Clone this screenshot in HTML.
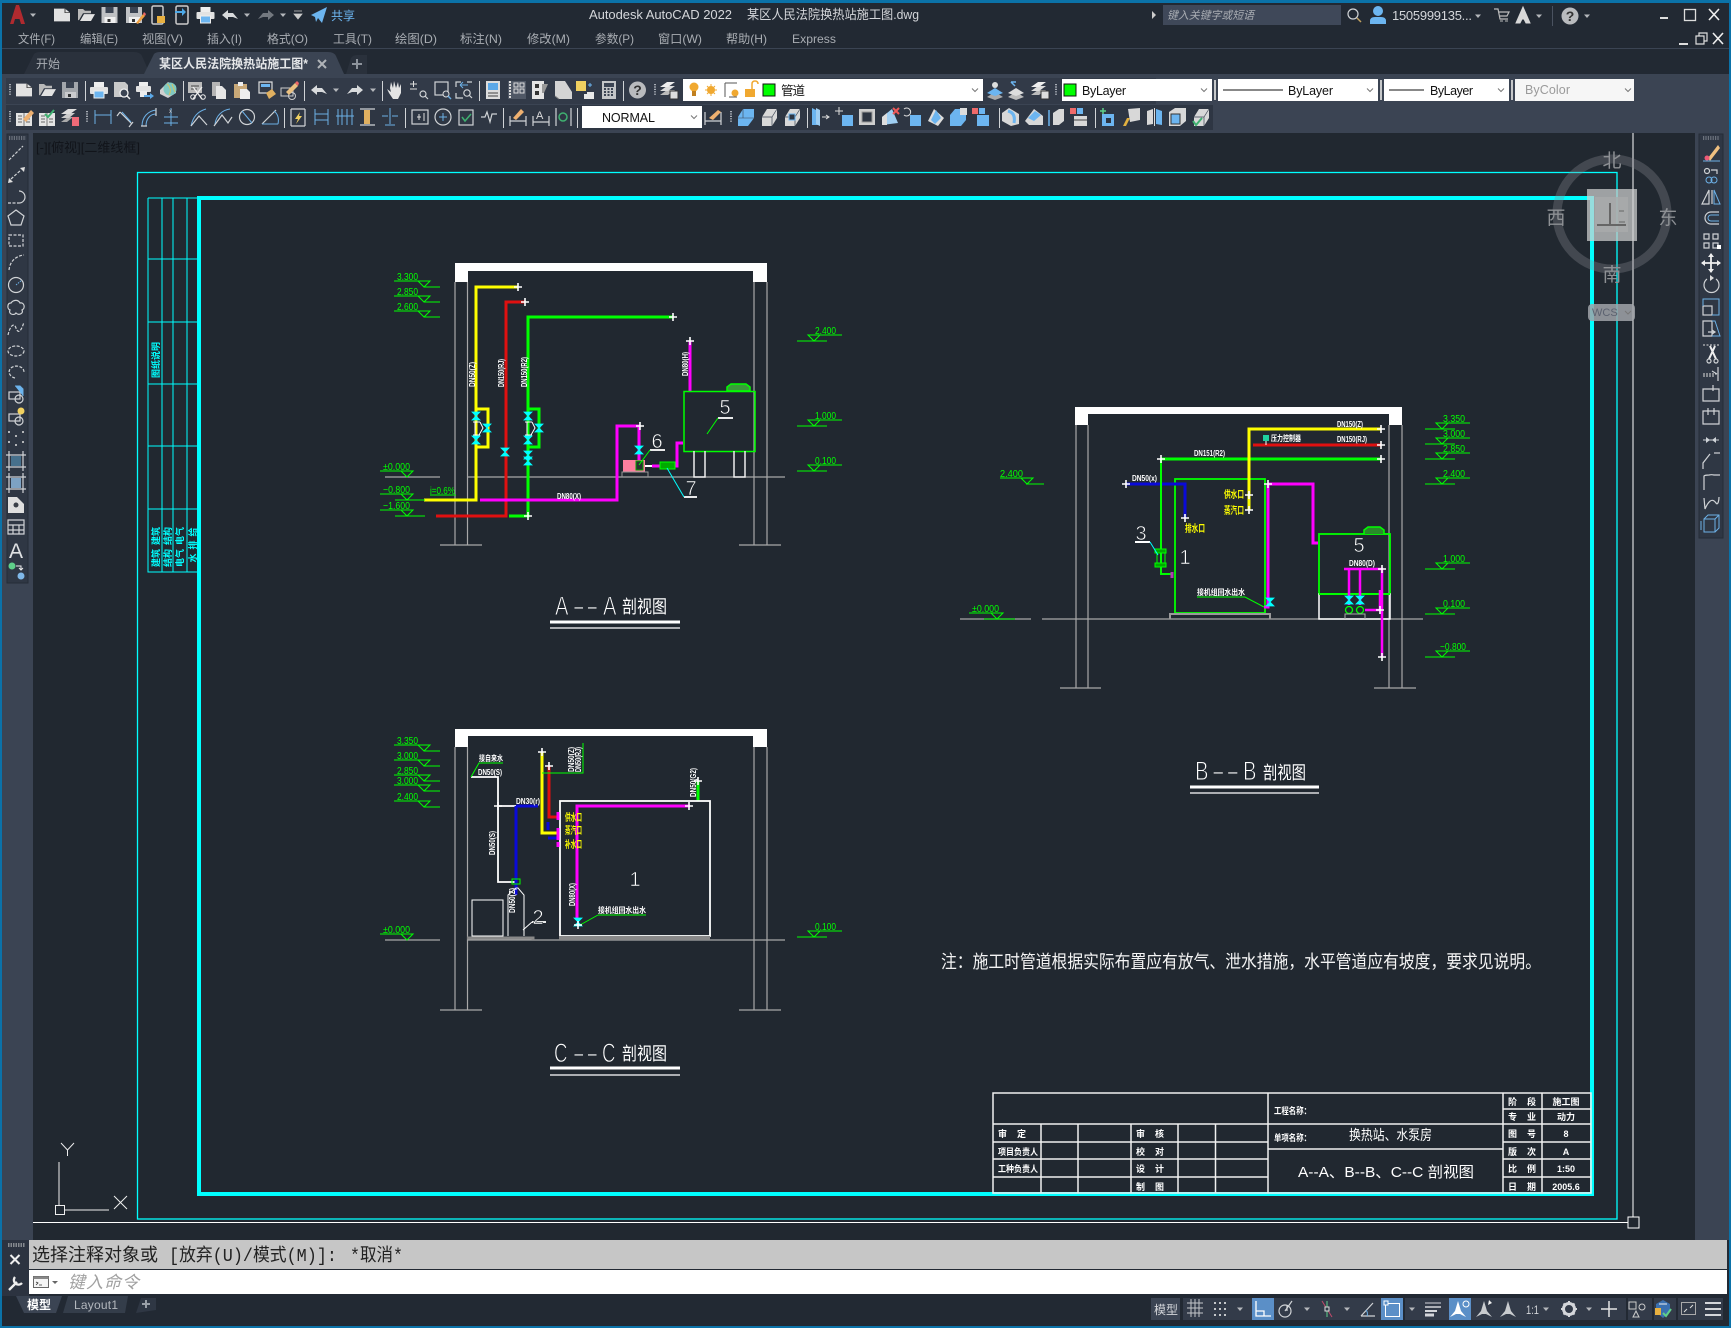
<!DOCTYPE html>
<html lang="zh"><head><meta charset="utf-8"><title>Autodesk AutoCAD 2022</title>
<style>
html,body{margin:0;padding:0;background:#222933;width:1731px;height:1328px;overflow:hidden}
svg{display:block}
text{font-family:"Liberation Sans","Noto Sans CJK SC",sans-serif}
.m{font-size:12px;fill:#a9adb3}
.t{font-size:13px;fill:#d4d6da}
.k{font-size:12.5px;fill:#111}
.g{font-size:10px;fill:#0f0}
.w{font-size:8px;fill:#fff;font-weight:700}
.y{font-size:10px;fill:#ff0;font-weight:700}
.n{font-size:20px;fill:#fff;stroke:#212830;stroke-width:.6}
.ti{font-size:27px;fill:#fff;stroke:#212830;stroke-width:.9}
.tc{font-size:18px;fill:#fff}
.b{font-size:9px;fill:#fff;font-weight:700}
.c{font-size:9px;fill:#0ff;font-weight:700}
.s{fill:none;stroke:#d0d3d6;stroke-width:1.2}
.d{fill:none;stroke:#d0d3d6;stroke-width:1.2;stroke-dasharray:3 1.5}
.l{fill:none;stroke:#6cb0e6;stroke-width:1}
.v{fill:#8d9094;font-size:19px}
.cmd{font-family:"Liberation Mono","Noto Sans CJK SC",monospace;font-size:18px;fill:#222}
</style></head><body>
<svg width="1731" height="1328" viewBox="0 0 1731 1328" xmlns="http://www.w3.org/2000/svg">
<defs>
<path id="car" d="M-3-1.5H3L0 2Z" fill="#b4b7bb"/>
<path id="chv" d="M-3-1.5L0 1.5L3-1.5" fill="none" stroke="#777" stroke-width="1"/>
<g id="doc" transform="scale(1 .8)"><path d="M-8-8H3L8-3V8H-8Z" fill="#e2e2e2"/><path d="M3-8V-3H8" fill="none" stroke="#444"/></g>
<g id="open" transform="scale(1 .85)"><path d="M-8 6V-7H-3L-1-5H5V-2H-3L-7 6Z" fill="#b9b9b9"/><path d="M-6 7L-2-1H9L5 7Z" fill="#e2e2e2"/></g>
<g id="save"><path d="M-8-8H8V8H-8Z" fill="#bfc1c4"/><path d="M-4-8H4V-2H-4Z" fill="#3b4453"/><path d="M-5 2H6V8H-5Z" fill="#f0f0f0"/><rect x="-2" y="4" width="3" height="3" fill="#333"/></g>
<g id="sav2"><use href="#save"/><path d="M2 8L9-1L11 1L4 9Z" fill="#f0a040"/><path d="M9-1L11 1L12-1L10-3Z" fill="#e66"/></g>
<g id="print"><rect x="-5" y="-8" width="10" height="5" fill="#eee"/><rect x="-9" y="-3" width="18" height="7" rx="1" fill="#e2e2e2"/><rect x="-5" y="1" width="10" height="7" fill="#6cb5f0" stroke="#eee"/></g>
<g id="prev"><path d="M-8-8H3L6-5V7H-8Z" fill="#c9c9c9"/><circle cx="2" cy="3" r="4" fill="#3b4453" stroke="#eee" stroke-width="1.3"/><path d="M5 6L8 9" stroke="#eee" stroke-width="1.5"/></g>
<g id="pub"><rect x="-5" y="-8" width="9" height="4" fill="#eee"/><rect x="-8" y="-4" width="15" height="6" rx="1" fill="#e2e2e2"/><rect x="-4" y="1" width="7" height="6" fill="#eee"/><path d="M0 5H6V3L10 6L6 9V7H0Z" fill="#5ba8e8"/></g>
<g id="globe"><path d="M-8 0L0-8L8-4V3L0 8L-8 4Z" fill="#cfcfcf"/><circle cx="2" cy="-1" r="6.5" fill="#7fc9c2"/><path d="M-1-6C3-3 3 2 1 5M4-6L7 2" stroke="#d8c060" fill="none"/></g>
<g id="cut"><path d="M-8-8H6V3H-8Z" fill="#bbb"/><path d="M-5-4H3M-5-1H1" stroke="#444"/><path d="M-3-3L6 9M6-3L-3 9" stroke="#eee" stroke-width="1.3"/><circle cx="-3" cy="7" r="2.3" fill="none" stroke="#eee"/><circle cx="7" cy="7" r="2.3" fill="none" stroke="#eee"/></g>
<g id="copy"><path d="M-7-8H1V6H-7Z" fill="#b5b5b5"/><path d="M-3-4H3L7 0V9H-3Z" fill="#e6e6e6"/></g>
<g id="paste"><path d="M-8-6H5V8H-8Z" fill="#c8a878"/><rect x="-4" y="-8" width="5" height="4" fill="#eee"/><path d="M-2-1H5L8 2V9H-2Z" fill="#eee"/></g>
<g id="match"><path d="M-7-8H6V3H-7Z" fill="none" stroke="#ddd" stroke-width="1.2"/><rect x="-5" y="-6" width="9" height="3" fill="#6cb5f0"/><path d="M0 3L6-1L10 4L3 9Z" fill="#e0b060"/></g>
<g id="pen2"><rect x="-8" y="-2" width="12" height="8" fill="none" stroke="#ccc"/><circle cx="3" cy="6" r="3.5" fill="none" stroke="#ccc"/><path d="M-3 2L6-7L9-4L0 5Z" fill="#eac080"/><path d="M6-7L9-4L10-7L8-9Z" fill="#e66"/></g>
<path id="und" d="M-8 0L-2-5V-2H3L8 4L3 2H-2V5Z" fill="#d8dadc"/>
<path id="red" d="M8 0L2-5V-2H-3L-8 4L-3 2H2V5Z" fill="#d8dadc"/>
<path id="hand" d="M-6-2L-5-8L-3-2L-2-9L0-2L2-8L3-2L5-6L5 3L2 9H-3L-7 3L-9-1L-5 2Z" fill="#e4e4e4"/>
<g id="zq"><path d="M-11-6H-4M-7.500-9V-3M-11-1H-4" stroke="#ddd" fill="none"/><circle cx="2" cy="4" r="3" class="s"/><path d="M4 6L7 9" class="s"/></g>
<g id="zw"><rect x="-8" y="-8" width="13" height="13" class="s"/><circle cx="3" cy="4" r="3" fill="#3b4453" stroke="#ddd"/><path d="M5 6L8 9" stroke="#6cb0e6" stroke-width="1.5"/></g>
<g id="zp"><path d="M-8-3V-8H-3M3-8H8M-8 3V8H-1" class="s"/><path d="M-4-5H4M-4-5L-1-8M-4-5L-1-2" class="l"/><circle cx="3" cy="3" r="3.200" class="s"/><path d="M5 5L8 8" class="s"/></g>
<g id="prop"><rect x="-7" y="-9" width="14" height="18" fill="#ddd"/><rect x="-5" y="-7" width="10" height="7" fill="#5ba8e8"/><path d="M-5 3H5M-5 6H5" stroke="#444"/></g>
<g id="pal"><rect x="-9" y="-9" width="18" height="18" fill="#505866"/><path d="M-7-9V9" stroke="#ddd" stroke-dasharray="2 1" stroke-width="2"/><rect x="-3" y="-7" width="4" height="4" fill="none" stroke="#ddd"/><rect x="3" y="-7" width="4" height="4" fill="none" stroke="#ddd"/><rect x="-3" y="-1" width="4" height="4" fill="none" stroke="#ddd"/><rect x="3" y="-1" width="4" height="4" fill="none" stroke="#ddd"/></g>
<g id="tp"><path d="M-8-9H4V9H-8Z" fill="#e4e4e4"/><path d="M-5-6H-1V-2H-5ZM-5 1H-1V5H-5Z" fill="#333"/><path d="M2-6H8L4 3H2Z" fill="#999"/></g>
<g id="sh"><path d="M-8 6V-9L2-9L9 2V9H-4Z" fill="#d4d4d4"/><path d="M-4 9L-8 6" stroke="#888"/></g>
<g id="mk"><rect x="-9" y="-9" width="10" height="10" fill="#f0d060"/><path d="M2 2H9V9H-1V4H2Z" fill="#e8e8e8"/><path d="M3-5H7M5-7V-3" stroke="#6cb5f0"/></g>
<g id="calc"><rect x="-7" y="-9" width="14" height="18" fill="#c4c6c8"/><rect x="-5" y="-7" width="10" height="4" fill="#3b4453"/><path d="M-5-1H5M-5 2H5M-5 5H5" stroke="#3b4453" stroke-dasharray="2 1.500" stroke-width="2"/></g>
<g id="help"><circle r="8.500" fill="#b9bbbe"/><text x="0" y="5" text-anchor="middle" style="font-size:14px;font-weight:700;fill:#333">?</text></g>
<g id="lay"><path d="M-9 5L-2 0H6L-1 5Z" fill="#bbb"/><path d="M-9 1L-2-4H6L-1 1Z" fill="#ddd"/><path d="M-9-3L-2-8H6L-1-3Z" fill="#eee"/><rect x="1" y="1" width="8" height="8" fill="#ddd" stroke="#333"/></g>
<g id="note"><path d="M-8-4H8V9H-8Z" fill="#e4e4e4"/><path d="M0-4V9" stroke="#777"/><path d="M-6-1H-2M-6 2H-2M2 2H6M2 5H6M-6 5H-2" stroke="#666"/></g>
<g id="c3b"><path d="M-8 0L-3-8H8V1L2 9H-8Z" fill="#6cb5f0"/><path d="M-3-8L-3 1H-8M-3 1H8" stroke="#3b4453" stroke-width=".6" fill="none"/></g>
<g id="c3g"><path d="M-7 0L-2-8H8V1L3 9H-7Z" fill="#d8d8d8"/><path d="M-7 0H3V9M3 0L8-8" stroke="#3b4453" stroke-width=".7" fill="none"/></g>
<g id="box"><rect x="-6" y="-5" width="12" height="12" fill="#6cb5f0"/><rect x="-2" y="-1" width="5" height="5" fill="#2c3340"/></g>
<g id="mL"><path d="M0 0H36L30 6L24 0M30 6H46" fill="none" stroke="#0f0"/></g>
<g id="mR"><path d="M0 6H30M11 0H23L17 6ZM17 0H45" fill="none" stroke="#0f0"/></g>
<g id="mG"><path d="M0 0H33L27 6L21 0" fill="none" stroke="#0f0"/></g>
<g id="val"><path d="M-4-4H4L-4 4H4Z" fill="#0ff" stroke="#0ff" stroke-width=".8"/></g>
<path id="x" d="M-4 0H4M0-4V4" stroke="#fff" stroke-width="1.6" fill="none"/>
<g id="dot"><path d="M0 0V12" stroke="#a8adb5" stroke-width="2" stroke-dasharray="1.2 1.2"/></g>
</defs>

<!-- window -->
<rect width="1731" height="1328" fill="#222933"/>
<rect x="0" y="48" width="1731" height="1" fill="#3b4453"/>
<path d="M24 74L34 54Q36 52 40 52H134Q140 52 142 56L150 74Z" fill="#2a313c"/>
<path d="M144 74L154 54Q156 52 160 52H328Q334 52 336 56L344 74Z" fill="#3b4453"/>
<path d="M346 74L351 58Q353 55 357 55H367V74Z" fill="#2a313c"/>
<!-- toolbar band -->
<rect x="0" y="74" width="1731" height="59" fill="#3b4453"/>
<rect x="6" y="78" width="1150" height="26" fill="#323a48"/>
<rect x="6" y="105" width="1207" height="25" fill="#2e3643"/>
<!-- side bars -->
<rect x="0" y="133" width="33" height="1107" fill="#3b4453"/>
<rect x="1695" y="133" width="36" height="1107" fill="#3b4453"/>
<rect x="7" y="134" width="21" height="449" fill="#2f3744" stroke="#252c37"/>
<rect x="1699" y="134" width="24" height="404" fill="#2f3744" stroke="#252c37"/>
<!-- drawing area -->
<rect x="33" y="133" width="1662" height="1107" fill="#212830"/>
<text x="36" y="152" style="font-size:13px;fill:#11141a">[-][俯视][二维线框]</text>

<!-- frame -->
<g fill="none">
<path d="M1633 133V1223M33 1222.500H1633" stroke="#fff" stroke-width="1"/>
<rect x="137.500" y="172.500" width="1479.500" height="1046.500" stroke="#0ff" stroke-width="1.300"/>
<rect x="199" y="198" width="1393" height="996" stroke="#0ff" stroke-width="4"/>
<path d="M148 198V572H199M162 198V572M173 198V572M187 198V572M148 198H199M148 259H199M148 322H199M148 384H199M148 446H199M148 509H199" stroke="#0ff" stroke-width="1"/>
<rect x="1628" y="1217" width="11" height="11" stroke="#fff" fill="#212830"/>
</g>
<g text-anchor="middle">
<text transform="translate(159,351) rotate(-90)" class="c">说明</text>
<text transform="translate(159,369) rotate(-90)" class="c">图纸</text>
<text transform="translate(159,536) rotate(-90)" class="c">建筑</text>
<text transform="translate(159,558) rotate(-90)" class="c">建筑</text>
<text transform="translate(171,536) rotate(-90)" class="c">结构</text>
<text transform="translate(171,558) rotate(-90)" class="c">结构</text>
<text transform="translate(183,536) rotate(-90)" class="c">电气</text>
<text transform="translate(183,558) rotate(-90)" class="c">电气</text>
<text transform="translate(196,532) rotate(-90)" class="c">给</text>
<text transform="translate(196,545) rotate(-90)" class="c">排</text>
<text transform="translate(196,558) rotate(-90)" class="c">水</text>
</g>

<!-- SECTION A -->
<g fill="none">
<path d="M455 263H767V282H753V271H468V282H455Z" fill="#fff"/>
<path d="M455 282V545M467.500 282V545M440 545H482M754 282V545M767 282V545M739 545H781M385 477H440M467 477H785" stroke="#a8a8a8" stroke-width="1.200"/>
<g stroke-width="3">
<path d="M518 287H476V500H424M476 409H488V447H476" stroke="#ff0"/>
<path d="M525 302H506V516H436" stroke="#e01010"/>
<path d="M673 317H528V516H509M528 409H539V447H528" stroke="#0f0"/>
<path d="M480 500H617V426H639V460M652 466H660M675 466H677V443H683M690 341V392" stroke="#f0f"/>
</g>
<rect x="684" y="391.500" width="71" height="60" stroke="#0f0" stroke-width="1.500"/>
<path d="M727 391V387L731 384H746L750 387V391Z" stroke="#0f0" stroke-width="1.500" fill="#3a9a3a"/>
<path d="M694 451V477H705V451M734 451V477H745V451" stroke="#eee" stroke-width="1.500"/>
<rect x="623" y="460" width="22" height="12" fill="#ff7f9f"/><rect x="636" y="461" width="7" height="9" fill="#2a3030" stroke="#0a0"/>
<path d="M622 477V472H648V477" stroke="#999"/>
<rect x="660" y="462" width="15" height="7" fill="#0a0" stroke="#0f0"/>
<path d="M645 466H652" stroke="#fff" stroke-width="2"/>
<path d="M718 418H733" stroke="#fff" stroke-width="1.800"/><path d="M718 418L707 434" stroke="#0f0"/>
<path d="M650 450H665" stroke="#fff" stroke-width="1.800"/><path d="M650 450L639 465" stroke="#0f0"/>
<path d="M684 497H697" stroke="#fff" stroke-width="1.800"/><path d="M684 497L667 468" stroke="#0ff"/>
<path d="M473 422H480M473 435H480M475 422V435M480 422L483 428L479 435" stroke="#fff"/>
<path d="M525 422H532M525 435H532M527 422V435M532 422L535 428L531 435" stroke="#fff"/>
<path d="M550 622H680" stroke="#fff" stroke-width="3"/><path d="M550 628H680" stroke="#fff" stroke-width="1.300"/>
</g>
<use href="#val" x="476" y="416"/><use href="#val" x="476" y="440"/><use href="#val" x="487" y="428"/>
<use href="#val" x="528" y="416"/><use href="#val" x="528" y="440"/><use href="#val" x="539" y="428"/><use href="#val" x="528" y="455"/><use href="#val" x="528" y="461"/>
<use href="#val" x="505" y="452"/><use href="#val" x="639" y="450"/>
<use href="#x" x="518" y="287"/><use href="#x" x="525" y="302"/><use href="#x" x="673" y="317"/><use href="#x" x="690" y="341"/><use href="#x" x="640" y="426"/><use href="#x" x="528" y="516"/>
<use href="#mL" x="394" y="281"/><use href="#mL" x="394" y="296"/><use href="#mL" x="394" y="311"/>
<use href="#mR" x="797" y="335"/><use href="#mR" x="797" y="420"/><use href="#mR" x="797" y="465"/>
<use href="#mG" x="380" y="471"/><use href="#mG" x="380" y="494"/><use href="#mG" x="380" y="510"/>
<path d="M395 500H425M395 516H425" stroke="#0f0" fill="none"/>
<path d="M430 495H456" stroke="#0f0" fill="none"/>
<g>
<text class="g" x="397" y="280" textLength="21" lengthAdjust="spacingAndGlyphs">3.300</text>
<text class="g" x="397" y="295" textLength="21" lengthAdjust="spacingAndGlyphs">2.850</text>
<text class="g" x="397" y="310" textLength="21" lengthAdjust="spacingAndGlyphs">2.600</text>
<text class="g" x="815" y="334" textLength="21" lengthAdjust="spacingAndGlyphs">2.400</text>
<text class="g" x="815" y="419" textLength="21" lengthAdjust="spacingAndGlyphs">1.000</text>
<text class="g" x="815" y="464" textLength="21" lengthAdjust="spacingAndGlyphs">0.100</text>
<text class="g" x="383" y="470" textLength="27" lengthAdjust="spacingAndGlyphs">±0.000</text>
<text class="g" x="383" y="493" textLength="27" lengthAdjust="spacingAndGlyphs">−0.800</text>
<text class="g" x="383" y="509" textLength="27" lengthAdjust="spacingAndGlyphs">−1.600</text>
<text class="g" x="430" y="494" textLength="25" lengthAdjust="spacingAndGlyphs">i=0.6%</text>
</g>
<text class="w" x="557" y="499" textLength="24" lengthAdjust="spacingAndGlyphs">DN80(X)</text>
<text class="w" transform="translate(475,387) rotate(-90)" textLength="25" lengthAdjust="spacingAndGlyphs">DN50(Z)</text>
<text class="w" transform="translate(504,387) rotate(-90)" textLength="28" lengthAdjust="spacingAndGlyphs">DN150(RJ)</text>
<text class="w" transform="translate(527,387) rotate(-90)" textLength="30" lengthAdjust="spacingAndGlyphs">DN150(R2)</text>
<text class="w" transform="translate(688,376) rotate(-90)" textLength="24" lengthAdjust="spacingAndGlyphs">DN80(H)</text>
<text class="n" x="725" y="414" text-anchor="middle">5</text>
<text class="n" x="657" y="448" text-anchor="middle">6</text>
<text class="n" x="691" y="495" text-anchor="middle">7</text>
<text class="ti" x="555" y="615" textLength="13.500" lengthAdjust="spacingAndGlyphs">A</text>
<text class="ti" x="572" y="615" textLength="27" lengthAdjust="spacingAndGlyphs">--</text>
<text class="ti" x="603" y="615" textLength="13.500" lengthAdjust="spacingAndGlyphs">A</text>
<text class="tc" x="622" y="613" textLength="45" lengthAdjust="spacingAndGlyphs">剖视图</text>

<!-- SECTION B -->
<g fill="none">
<path d="M1075 407H1402V425H1389V414H1088V425H1075Z" fill="#fff"/>
<path d="M1076 425V688M1088 425V688M1060 688H1101M1389 425V688M1402 425V688M1374 688H1416M960 619H1031M1042 619H1423" stroke="#a8a8a8" stroke-width="1.200"/>
<rect x="1175" y="479" width="90" height="134" stroke="#0f0" stroke-width="1.800"/>
<path d="M1170 619V614H1270V619" stroke="#999" stroke-width="2"/>
<g stroke-width="3">
<path d="M1161 459H1381" stroke="#0f0"/>
<path d="M1253 445H1381" stroke="#e01010"/>
<path d="M1126 484H1185V518" stroke="#0a0ad8"/>
<path d="M1381 429H1249V510" stroke="#ff0"/>
<path d="M1268 484H1313V543H1318M1268 484V607H1264" stroke="#f0f"/>
</g>
<path d="M1161 459V574H1172" stroke="#0f0" stroke-width="2"/>
<rect x="1155" y="549" width="11" height="4" fill="#0a0" stroke="#0f0"/><rect x="1157" y="553" width="8" height="11" stroke="#0f0"/><rect x="1155" y="563" width="11" height="4" fill="#0a0" stroke="#0f0"/>
<path d="M1172 572V578" stroke="#b040b0" stroke-width="3"/>
<rect x="1319" y="534" width="71" height="60" stroke="#0f0" stroke-width="1.800"/>
<path d="M1319 594H1390V619H1319Z" stroke="#fff" stroke-width="1.500"/>
<path d="M1319 594H1390" stroke="#0f0" stroke-width="2"/>
<path d="M1364 534V530L1368 527H1380L1384 530V534" stroke="#0f0" stroke-width="1.500" fill="#2a8a2a"/>
<g stroke="#f0f" stroke-width="2.500"><path d="M1344 569H1382V657M1349 569V605M1360 569V605M1365 610H1380M1380 590V610"/></g>
<circle cx="1349" cy="610" r="3.500" stroke="#0f0" stroke-width="1.300"/><circle cx="1360" cy="610" r="3.500" stroke="#0f0" stroke-width="1.300"/>
<path d="M1345 619V614H1365V619" stroke="#aaa"/>
<path d="M1135 542H1150" stroke="#fff" stroke-width="2"/><path d="M1150 542L1158 555" stroke="#0ff"/>
<path d="M1197 597H1245L1264 607" stroke="#0f0"/>
<path d="M1190 787H1319" stroke="#fff" stroke-width="3"/><path d="M1190 793H1319" stroke="#fff" stroke-width="1.300"/>
</g>
<rect x="1263" y="435" width="6" height="6" fill="#1fd0a0"/><path d="M1266 441V445" stroke="#fff"/>
<use href="#val" x="1349" y="600"/><use href="#val" x="1360" y="600"/><use href="#val" x="1270" y="602"/>
<use href="#x" x="1381" y="429"/><use href="#x" x="1381" y="445"/><use href="#x" x="1381" y="459"/><use href="#x" x="1161" y="459"/><use href="#x" x="1126" y="484"/><use href="#x" x="1185" y="518"/><use href="#x" x="1249" y="495"/><use href="#x" x="1249" y="510"/><use href="#x" x="1268" y="484"/><use href="#x" x="1382" y="569"/><use href="#x" x="1382" y="657"/><use href="#x" x="1380" y="610"/>
<use href="#mR" x="1425" y="423"/><use href="#mR" x="1425" y="438"/><use href="#mR" x="1425" y="453"/><use href="#mR" x="1425" y="478"/><use href="#mR" x="1425" y="563"/><use href="#mR" x="1425" y="608"/><use href="#mR" x="1425" y="651"/>
<path d="M1000 478H1033L1027 484L1021 478M1026 484H1044M969 613H1003L997 619L991 613M984 619H1015" stroke="#0f0" fill="none"/>
<g>
<text class="g" x="1443" y="422" textLength="22" lengthAdjust="spacingAndGlyphs">3.350</text>
<text class="g" x="1443" y="437" textLength="22" lengthAdjust="spacingAndGlyphs">3.000</text>
<text class="g" x="1443" y="452" textLength="22" lengthAdjust="spacingAndGlyphs">2.850</text>
<text class="g" x="1443" y="477" textLength="22" lengthAdjust="spacingAndGlyphs">2.400</text>
<text class="g" x="1443" y="562" textLength="22" lengthAdjust="spacingAndGlyphs">1.000</text>
<text class="g" x="1443" y="607" textLength="22" lengthAdjust="spacingAndGlyphs">0.100</text>
<text class="g" x="1440" y="650" textLength="26" lengthAdjust="spacingAndGlyphs">−0.800</text>
<text class="g" x="1000" y="477" textLength="23" lengthAdjust="spacingAndGlyphs">2.400</text>
<text class="g" x="972" y="612" textLength="27" lengthAdjust="spacingAndGlyphs">±0.000</text>
</g>
<text class="w" x="1337" y="427" textLength="26" lengthAdjust="spacingAndGlyphs">DN150(Z)</text>
<text class="w" x="1337" y="442" textLength="30" lengthAdjust="spacingAndGlyphs">DN150(RJ)</text>
<text class="w" x="1194" y="456" textLength="31" lengthAdjust="spacingAndGlyphs">DN151(R2)</text>
<text class="w" x="1132" y="481" textLength="25" lengthAdjust="spacingAndGlyphs">DN50(x)</text>
<text class="w" x="1349" y="566" textLength="26" lengthAdjust="spacingAndGlyphs">DN80(D)</text>
<text class="w" x="1271" y="441" textLength="30" lengthAdjust="spacingAndGlyphs">压力控制器</text>
<text class="w" x="1197" y="595" textLength="48" lengthAdjust="spacingAndGlyphs">接机组回水出水</text>
<text class="y" x="1224" y="498" textLength="20" lengthAdjust="spacingAndGlyphs">供水口</text>
<text class="y" x="1224" y="514" textLength="20" lengthAdjust="spacingAndGlyphs">蒸汽口</text>
<text class="y" x="1185" y="532" textLength="20" lengthAdjust="spacingAndGlyphs">排水口</text>
<text class="n" x="1141" y="540" text-anchor="middle">3</text>
<text class="n" x="1185" y="564" text-anchor="middle">1</text>
<text class="n" x="1359" y="552" text-anchor="middle">5</text>
<text class="ti" x="1195" y="780" textLength="13.500" lengthAdjust="spacingAndGlyphs">B</text>
<text class="ti" x="1211" y="780" textLength="29" lengthAdjust="spacingAndGlyphs">--</text>
<text class="ti" x="1243" y="780" textLength="13.500" lengthAdjust="spacingAndGlyphs">B</text>
<text class="tc" x="1263" y="779" textLength="43" lengthAdjust="spacingAndGlyphs">剖视图</text>

<!-- SECTION C -->
<g fill="none">
<path d="M455 729H767V747H753V736H468V747H455Z" fill="#fff"/>
<path d="M455 747V1010M467.500 747V1010M440 1010H482M754 747V1010M767 747V1010M739 1010H781M385 940H440M467 940H785" stroke="#a8a8a8" stroke-width="1.200"/>
<path d="M471 777H498V882H515M498 806H516" stroke="#fff" stroke-width="1.800"/>
<path d="M471 777L479 763H503" stroke="#0f0"/>
<path d="M516 806H538M516 806V895" stroke="#0a0ad8" stroke-width="3"/>
<path d="M548 822V830M548 838H558" stroke="#0a0ad8" stroke-width="3"/>
<path d="M542 752V833H558" stroke="#ff0" stroke-width="3"/>
<path d="M549 766V817H558" stroke="#e01010" stroke-width="3"/>
<path d="M542 773H583V743" stroke="#0f0"/>
<path d="M698 781V801" stroke="#0f0" stroke-width="3"/>
<rect x="560" y="801" width="150" height="135" stroke="#fff" stroke-width="1.800"/>
<path d="M559 938H710" stroke="#888" stroke-width="4"/>
<path d="M690 806H577V920" stroke="#f0f" stroke-width="3"/>
<path d="M558 812V820M558 828V840M558 842V847" stroke="#f0f" stroke-width="3"/>
<rect x="472" y="900" width="31" height="36" stroke="#fff"/>
<path d="M508 936V895L516 888H518L524 895V936" stroke="#fff"/>
<path d="M467 938H533V940" stroke="#888" stroke-width="3"/>
<path d="M532 922H546" stroke="#fff" stroke-width="1.800"/><path d="M532 922L523 930" stroke="#fff"/>
<path d="M598 915H646M598 915L580 925" stroke="#0f0"/>
<rect x="512" y="879" width="8" height="5" stroke="#0f0"/>
<path d="M550 1068H680" stroke="#fff" stroke-width="3"/><path d="M550 1075H680" stroke="#fff" stroke-width="1.300"/>
</g>
<use href="#val" x="578" y="922"/>
<use href="#x" x="542" y="752"/><use href="#x" x="549" y="766"/><use href="#x" x="689" y="806"/><use href="#x" x="698" y="781"/><use href="#x" x="498" y="806"/><use href="#x" x="578" y="925"/>
<use href="#mL" x="394" y="745"/><use href="#mL" x="394" y="760"/><use href="#mL" x="394" y="775"/><use href="#mL" x="394" y="785"/><use href="#mL" x="394" y="801"/>
<use href="#mR" x="797" y="931"/><use href="#mG" x="380" y="934"/>
<g>
<text class="g" x="397" y="744" textLength="21" lengthAdjust="spacingAndGlyphs">3.350</text>
<text class="g" x="397" y="759" textLength="21" lengthAdjust="spacingAndGlyphs">3.000</text>
<text class="g" x="397" y="774" textLength="21" lengthAdjust="spacingAndGlyphs">2.850</text>
<text class="g" x="397" y="784" textLength="21" lengthAdjust="spacingAndGlyphs">3.000</text>
<text class="g" x="397" y="800" textLength="21" lengthAdjust="spacingAndGlyphs">2.400</text>
<text class="g" x="815" y="930" textLength="21" lengthAdjust="spacingAndGlyphs">0.100</text>
<text class="g" x="383" y="933" textLength="27" lengthAdjust="spacingAndGlyphs">±0.000</text>
</g>
<text class="w" x="479" y="761" textLength="24" lengthAdjust="spacingAndGlyphs">接自来水</text>
<text class="w" x="478" y="775" textLength="24" lengthAdjust="spacingAndGlyphs">DN50(S)</text>
<text class="w" x="516" y="804" textLength="24" lengthAdjust="spacingAndGlyphs">DN30(r)</text>
<text class="w" transform="translate(495,855) rotate(-90)" textLength="24" lengthAdjust="spacingAndGlyphs">DN50(S)</text>
<text class="w" transform="translate(515,913) rotate(-90)" textLength="25" lengthAdjust="spacingAndGlyphs">DN50(Z)</text>
<text class="w" transform="translate(575,906) rotate(-90)" textLength="23" lengthAdjust="spacingAndGlyphs">DN80(X)</text>
<text class="w" transform="translate(574,772) rotate(-90)" textLength="25" lengthAdjust="spacingAndGlyphs">DN50(Z)</text>
<text class="w" transform="translate(581,772) rotate(-90)" textLength="25" lengthAdjust="spacingAndGlyphs">DN50(RJ)</text>
<text class="w" transform="translate(696,797) rotate(-90)" textLength="29" lengthAdjust="spacingAndGlyphs">DN50(G2)</text>
<text class="w" x="598" y="913" textLength="48" lengthAdjust="spacingAndGlyphs">接机组回水出水</text>
<text class="y" x="565" y="821" textLength="17" lengthAdjust="spacingAndGlyphs">供水口</text>
<text class="y" x="565" y="834" textLength="17" lengthAdjust="spacingAndGlyphs">蒸汽口</text>
<text class="y" x="565" y="848" textLength="17" lengthAdjust="spacingAndGlyphs">补水口</text>
<text class="n" x="635" y="886" text-anchor="middle">1</text>
<text class="n" x="538" y="924" text-anchor="middle">2</text>
<text class="ti" x="554" y="1062" textLength="13.500" lengthAdjust="spacingAndGlyphs">C</text>
<text class="ti" x="572" y="1062" textLength="27" lengthAdjust="spacingAndGlyphs">--</text>
<text class="ti" x="602" y="1062" textLength="13.500" lengthAdjust="spacingAndGlyphs">C</text>
<text class="tc" x="622" y="1060" textLength="45" lengthAdjust="spacingAndGlyphs">剖视图</text>

<text x="941" y="968" textLength="600" lengthAdjust="spacingAndGlyphs" style="font-size:18px;fill:#f4f4f4">注：施工时管道根据实际布置应有放气、泄水措施，水平管道应有坡度，要求见说明。</text>

<!-- TITLE BLOCK -->
<path d="M993 1093H1591V1193H993ZM1041 1124V1193M1078 1124V1193M1131 1124V1193M1178 1124V1193M1215.500 1124V1193M1268 1093V1193M1503 1093V1193M1542 1093V1193M993 1124H1268M993 1142H1268M993 1159H1268M993 1177H1268M1268 1124H1503M1268 1149H1503M1503 1109H1591M1503 1124H1591M1503 1142H1591M1503 1159H1591M1503 1177H1591" fill="none" stroke="#f0f0f0" stroke-width="1.500"/>
<g>
<text class="b" x="998" y="1137" textLength="28">审　定</text>
<text class="b" x="998" y="1155" textLength="40" lengthAdjust="spacingAndGlyphs">项目负责人</text>
<text class="b" x="998" y="1172" textLength="40" lengthAdjust="spacingAndGlyphs">工种负责人</text>
<text class="b" x="1136" y="1137" textLength="28">审　核</text>
<text class="b" x="1136" y="1155" textLength="28">校　对</text>
<text class="b" x="1136" y="1172" textLength="28">设　计</text>
<text class="b" x="1136" y="1190" textLength="28">制　图</text>
<text class="b" x="1274" y="1114" textLength="37" lengthAdjust="spacingAndGlyphs">工程名称：</text>
<text class="b" x="1274" y="1141" textLength="37" lengthAdjust="spacingAndGlyphs">单项名称：</text>
<text class="b" x="1508" y="1105" textLength="28">阶　段</text>
<text class="b" x="1508" y="1120" textLength="28">专　业</text>
<text class="b" x="1508" y="1137" textLength="28">图　号</text>
<text class="b" x="1508" y="1155" textLength="28">版　次</text>
<text class="b" x="1508" y="1172" textLength="28">比　例</text>
<text class="b" x="1508" y="1190" textLength="28">日　期</text>
<text class="b" x="1566" y="1105" text-anchor="middle">施工图</text>
<text class="b" x="1566" y="1120" text-anchor="middle">动力</text>
<text class="b" x="1566" y="1137" text-anchor="middle">8</text>
<text class="b" x="1566" y="1155" text-anchor="middle">A</text>
<text class="b" x="1566" y="1172" text-anchor="middle">1:50</text>
<text class="b" x="1566" y="1190" text-anchor="middle">2005.6</text>
</g>
<text x="1349" y="1140" textLength="83" lengthAdjust="spacingAndGlyphs" style="font-size:14px;fill:#fff">换热站、水泵房</text>
<text x="1298" y="1177" textLength="176" lengthAdjust="spacingAndGlyphs" style="font-size:15px;fill:#fff">A--A、B--B、C--C 剖视图</text>

<!-- UCS -->
<path d="M59 1162V1205M65 1210H109M114 1196L127 1209M127 1196L114 1209M61 1143L67.500 1150L74 1143M67.500 1150V1156" stroke="#eee" fill="none" stroke-width="1"/>
<rect x="55.500" y="1205.500" width="9" height="9" fill="none" stroke="#eee"/>

<!-- VIEWCUBE -->
<circle cx="1612" cy="214" r="55" fill="none" stroke="#8a8d92" stroke-opacity=".33" stroke-width="9"/>
<rect x="1587" y="189" width="50" height="52" fill="#cfd0d0" fill-opacity=".72"/>
<rect x="1595" y="197" width="33" height="35" fill="#a9abab" fill-opacity=".8"/>
<path d="M1610 203V226M1597 225H1626" stroke="#666" stroke-width="2" fill="none"/><path d="M1619 211H1624M1619 222H1625" stroke="#666"/>
<text class="v" x="1612" y="167" text-anchor="middle">北</text>
<text class="v" x="1612" y="281" text-anchor="middle">南</text>
<text class="v" x="1556" y="224" text-anchor="middle">西</text>
<text class="v" x="1668" y="224" text-anchor="middle">东</text>
<rect x="1588" y="304" width="47" height="17" rx="4" fill="#a0a3a9" fill-opacity=".85"/>
<text x="1592" y="316" style="font-size:11px;fill:#5c6270">WCS</text><path d="M1625 311L1628 314L1631 311" stroke="#777" fill="none"/>

<!-- TITLE BAR -->
<path d="M10 24L16 5H19L25 24H21L19.500 19H15L13.500 24Z" fill="#b02a2f"/>
<use href="#car" x="33" y="15"/>
<use href="#doc" x="62" y="15"/><use href="#open" x="86" y="15"/><use href="#save" x="109.500" y="15"/><use href="#sav2" x="134" y="15"/>
<g transform="translate(158,15)"><rect x="-6" y="-9" width="11" height="18" rx="1.500" fill="none" stroke="#ccc" stroke-width="1.500"/><rect x="-1" y="1" width="8" height="7" fill="#e8b040"/></g>
<g transform="translate(182,15)"><rect x="-6" y="-9" width="12" height="18" rx="1.500" fill="none" stroke="#ccc" stroke-width="1.500"/><path d="M-7-4H0V-7L4-3L0 1V-2H-7Z" fill="#4ca8e8"/></g>
<use href="#print" x="205.500" y="15"/>
<use href="#und" x="230" y="15"/><use href="#car" x="247" y="15"/>
<use href="#red" x="266" y="15" opacity=".45"/><use href="#car" x="283" y="15"/>
<path d="M294 11H302M294 14H302L298 19Z" fill="#ccc" stroke="#ccc" stroke-width=".8"/>
<path d="M311 15L327 7L322 23L318 18L316 22L315 17Z" fill="#6cb5f0"/>
<text x="331" y="20" style="font-size:12px;fill:#6cb5f0">共享</text>
<text class="t" x="589" y="19" textLength="143">Autodesk AutoCAD 2022</text>
<text class="t" x="747" y="19" textLength="172" lengthAdjust="spacingAndGlyphs">某区人民法院换热站施工图.dwg</text>
<path d="M1152 11L1156 15L1152 19Z" fill="#ccc"/>
<rect x="1163" y="5" width="178" height="20" fill="#3f4859"/>
<text x="1167" y="19" textLength="87" lengthAdjust="spacingAndGlyphs" style="font-size:11px;fill:#a8acb2;font-style:italic">键入关键字或短语</text>
<circle cx="1353" cy="14" r="5" class="s" /><path d="M1357 18L1361 22" stroke="#c0a060" stroke-width="1.500"/>
<circle cx="1378" cy="11" r="5" fill="#6cb5f0"/><path d="M1370 24V21Q1370 17 1375 17H1381Q1386 17 1386 21V24Z" fill="#6cb5f0"/>
<text x="1392" y="20" textLength="80" style="font-size:13px;fill:#d4d6da">1505999135...</text>
<use href="#car" x="1478" y="16"/>
<path d="M1494 9H1498L1500 19H1508M1499 12H1509L1507 16H1500" fill="none" stroke="#bbb" stroke-width="1.200"/><path d="M1500 21H1503M1505 21H1508" stroke="#bbb"/>
<path d="M1523 7L1530 23H1526L1524 19H1522L1520 23H1516Z" fill="#d8d8d8" stroke="#d8d8d8"/><use href="#car" x="1539" y="16"/>
<rect x="1552" y="6" width="1" height="20" fill="#4a5260"/>
<use href="#help" x="1570" y="16"/><use href="#car" x="1587" y="16"/>
<path d="M1660 18H1668" stroke="#ddd" stroke-width="2"/>
<rect x="1684.500" y="9.500" width="11" height="11" fill="none" stroke="#ddd" stroke-width="1.300"/>
<path d="M1709 9L1719 20M1719 9L1709 20" stroke="#eee" stroke-width="1.600"/>

<!-- MENU -->
<g>
<text class="m" x="18" y="43" textLength="37" lengthAdjust="spacingAndGlyphs">文件(F)</text>
<text class="m" x="80" y="43" textLength="38" lengthAdjust="spacingAndGlyphs">编辑(E)</text>
<text class="m" x="142" y="43" textLength="41" lengthAdjust="spacingAndGlyphs">视图(V)</text>
<text class="m" x="207" y="43" textLength="35" lengthAdjust="spacingAndGlyphs">插入(I)</text>
<text class="m" x="267" y="43" textLength="41" lengthAdjust="spacingAndGlyphs">格式(O)</text>
<text class="m" x="333" y="43" textLength="39" lengthAdjust="spacingAndGlyphs">工具(T)</text>
<text class="m" x="395" y="43" textLength="42" lengthAdjust="spacingAndGlyphs">绘图(D)</text>
<text class="m" x="460" y="43" textLength="42" lengthAdjust="spacingAndGlyphs">标注(N)</text>
<text class="m" x="527" y="43" textLength="43" lengthAdjust="spacingAndGlyphs">修改(M)</text>
<text class="m" x="595" y="43" textLength="39" lengthAdjust="spacingAndGlyphs">参数(P)</text>
<text class="m" x="658" y="43" textLength="44" lengthAdjust="spacingAndGlyphs">窗口(W)</text>
<text class="m" x="726" y="43" textLength="41" lengthAdjust="spacingAndGlyphs">帮助(H)</text>
<text class="m" x="792" y="43" textLength="44" lengthAdjust="spacingAndGlyphs">Express</text>
</g>
<path d="M1679 44H1688" stroke="#ddd" stroke-width="2"/>
<path d="M1696 36V44H1704V36ZM1699 36V33H1707V41H1704" fill="none" stroke="#ddd" stroke-width="1.200"/>
<path d="M1713 33L1723 44M1723 33L1713 44" stroke="#eee" stroke-width="1.600"/>

<!-- DOC TABS -->
<text x="36" y="68" style="font-size:12px;fill:#a9adb3">开始</text>
<text x="159" y="68" textLength="149" lengthAdjust="spacingAndGlyphs" style="font-size:12.500px;fill:#e4e6e8;font-weight:700">某区人民法院换热站施工图*</text>
<path d="M318 60L326 68M326 60L318 68" stroke="#b0b3b8" stroke-width="2"/>
<path d="M352 64H362M357 59V69" stroke="#8d939c" stroke-width="2"/>

<!-- ROW 2 -->
<use href="#dot" x="10" y="84"/>
<use href="#doc" x="24" y="90"/><use href="#open" x="47" y="90"/><use href="#save" x="70" y="90" opacity=".8"/>
<rect x="85" y="81" width="1" height="20" fill="#d0d3d6"/>
<use href="#print" x="99" y="90"/><use href="#prev" x="122" y="90"/><use href="#pub" x="144" y="90"/><use href="#globe" x="168" y="90"/>
<rect x="183" y="81" width="1" height="20" fill="#d0d3d6"/>
<use href="#cut" x="196" y="90"/><use href="#copy" x="219" y="90"/><use href="#paste" x="242" y="90"/><use href="#match" x="266" y="90"/><use href="#pen2" x="289" y="90"/>
<rect x="304" y="81" width="1" height="20" fill="#d0d3d6"/>
<use href="#und" x="319" y="90"/><use href="#car" x="336" y="90"/><use href="#red" x="355" y="90"/><use href="#car" x="373" y="90"/>
<rect x="382" y="81" width="1" height="20" fill="#d0d3d6"/>
<use href="#hand" x="396" y="90"/><use href="#zq" x="421" y="90"/><use href="#zw" x="443" y="90"/><use href="#zp" x="464" y="90"/>
<rect x="479" y="81" width="1" height="20" fill="#d0d3d6"/>
<use href="#prop" x="493" y="90"/><use href="#pal" x="517" y="90"/><use href="#tp" x="540" y="90"/><use href="#sh" x="563" y="90"/><use href="#mk" x="585" y="90"/><use href="#calc" x="609" y="90"/>
<rect x="623" y="81" width="1" height="20" fill="#d0d3d6"/>
<use href="#help" x="637.500" y="90"/>
<use href="#dot" x="655" y="84"/>
<use href="#lay" x="669" y="90"/>

<rect x="683" y="79" width="300" height="22" fill="#fff"/>
<circle cx="694" cy="87" r="4.500" fill="#f0a830"/><rect x="692" y="91" width="4" height="5" fill="#c08020"/>
<circle cx="711" cy="90" r="4" fill="#f0a830"/><path d="M705 90H717M711 84V96M707 86L715 94M715 86L707 94" stroke="#f0a830"/>
<path d="M725 83H737M725 83V97M737 97H729" fill="none" stroke="#555"/><circle cx="735" cy="93" r="3.500" fill="#f0a830"/>
<rect x="745" y="89" width="10" height="8" fill="#f0a830"/><path d="M752 89V84Q752 81 755 81Q758 81 758 84" fill="none" stroke="#f0a830" stroke-width="1.500"/>
<rect x="763" y="84" width="12" height="12" fill="#0f0" stroke="#111"/>
<text class="k" x="781" y="95" textLength="24">管道</text>
<use href="#chv" x="975" y="90"/>
<g transform="translate(995,90)"><path d="M-8 7L0 2L8 7L0 10Z" fill="#aaa"/><path d="M-8 3L0-2L8 3L0 6Z" fill="#6cb5f0"/><circle cy="-5" r="3" fill="#ddd"/></g>
<g transform="translate(1016,90)"><path d="M-8 7L0 2L8 7L0 10Z" fill="#bbb"/><path d="M-8 3L0-2L8 3L0 6Z" fill="#ddd"/><path d="M-5-8L-1-4M-5-8H0" stroke="#6cb5f0" stroke-width="1.500"/></g>
<use href="#lay" x="1040" y="90"/>
<use href="#dot" x="1056" y="84"/>
<rect x="1062" y="79" width="150" height="22" fill="#fff"/>
<rect x="1064" y="84" width="12" height="12" fill="#0f0" stroke="#111"/>
<text class="k" x="1082" y="95" textLength="44">ByLayer</text><use href="#chv" x="1204" y="90"/>
<rect x="1214" y="80" width="2" height="20" fill="#c6c8ca"/>
<rect x="1218" y="79" width="160" height="22" fill="#fff"/>
<path d="M1223 90H1283" stroke="#111"/><text class="k" x="1288" y="95" textLength="45">ByLayer</text><use href="#chv" x="1370" y="90"/>
<rect x="1380" y="80" width="2" height="20" fill="#c6c8ca"/>
<rect x="1384" y="79" width="125" height="22" fill="#fff"/>
<path d="M1389 90H1424" stroke="#111"/><text class="k" x="1430" y="95" textLength="43">ByLayer</text><use href="#chv" x="1501" y="90"/>
<rect x="1511" y="80" width="2" height="20" fill="#c6c8ca"/>
<rect x="1515" y="79" width="119" height="22" fill="#f6f6f6"/>
<text x="1525" y="94" textLength="45" style="font-size:12.500px;fill:#9a9a9a">ByColor</text><use href="#chv" x="1628" y="90"/>

<!-- ROW 3 -->
<use href="#dot" x="10" y="111"/>
<g transform="translate(24,117)"><use href="#note"/><path d="M-1 2L7-7L10-4L2 5Z" fill="#eeb070"/></g>
<g transform="translate(47,117)"><use href="#note"/><path d="M-2-3L1 0L7-7" fill="none" stroke="#3fb070" stroke-width="2"/></g>
<g transform="translate(70,117)"><path d="M-9 5L-2 0H3L-3 5Z" fill="#aaa"/><path d="M-9 1L-2-4H5L-1 1Z" fill="#ccc"/><path d="M-9-3L-2-8H7L0-3Z" fill="#ddd"/><rect x="2" y="0" width="7" height="9" fill="#ef6a78"/></g>
<use href="#dot" x="87" y="111"/>
<path class="l" d="M95 110V124M111 110V124M95 115H111"/>
<path class="s" d="M120 112L132 124M117 116L120 112M129 127L133 122"/><path class="l" d="M122 112L131 122"/>
<path class="l" d="M142 126C142 117 148 111 156 110M146 126C146 119 150 114 156 114"/><path class="s" d="M141 126H147M156 108V116"/>
<path class="l" d="M164 117H178M171 108V126M164 123H178"/>
<text x="169" y="113" style="font-size:6px;fill:#ccc">x</text>
<path class="l" d="M191 126C193 116 199 111 206 109"/><path class="s" d="M191 126L199 116L207 125"/>
<path class="l" d="M215 124C216 116 222 110 230 109"/><path class="s" d="M214 126L222 115L228 123L232 117"/>
<circle cx="247" cy="117" r="7.500" class="s"/><path class="l" d="M242 111L252 123"/>
<path class="s" d="M262 124L276 110"/><path class="l" d="M262 124H278M274 111C278 114 279 119 278 124"/>
<rect x="284" y="108" width="1" height="20" fill="#d0d3d6"/>
<path class="s" d="M291 109H305M291 126H305"/><path class="s" d="M291 109V126M305 109V126"/><path d="M300 112L295 119H298L296 124L302 116H299Z" fill="#f0d060"/>
<path class="l" d="M315 109V125M328 109V125M315 114H328M315 120H328"/>
<path class="l" d="M338 109V125M342 109V125M347 109V125M352 109V125M336 116H354"/>
<path class="s" d="M360 109H375M360 125H375"/><rect x="364" y="110" width="6" height="14" fill="#e0b060"/>
<path class="l" d="M382 116H388M392 116H398M390 108V124M385 125H395"/>
<rect x="405" y="108" width="1" height="20" fill="#d0d3d6"/>
<rect x="412" y="110" width="16" height="14" class="s"/><path d="M417 117H421M419 114V120M424 113V121" stroke="#ddd"/>
<circle cx="443" cy="117" r="8" class="s"/><path class="l" d="M439 117H447M443 113V121"/>
<rect x="459" y="110" width="14" height="15" class="s"/><path d="M462 117L465 121L471 114" fill="none" stroke="#3fb070" stroke-width="1.500"/>
<path class="s" d="M481 117H485L487 112L490 122L492 114H497"/>
<rect x="503" y="108" width="1" height="20" fill="#d0d3d6"/>
<path class="s" d="M510 116V126M526 116V126M510 121H526"/><path d="M513 118L521 109L524 112L516 120Z" fill="#eeb070"/>
<path class="s" d="M533 116V126M549 116V126M533 122H549"/><text x="536" y="119" style="font-size:11px;fill:#ddd">A</text>
<path class="s" d="M556 108V126M571 108V126"/><circle cx="563" cy="117" r="4" fill="none" stroke="#3fb070" stroke-width="1.500"/>
<rect x="577" y="108" width="1" height="20" fill="#d0d3d6"/>
<rect x="582" y="106" width="120" height="22" fill="#fff"/>
<text class="k" x="602" y="122" textLength="53">NORMAL</text><use href="#chv" x="694" y="117"/>
<g transform="translate(713,117)"><path class="s" d="M-8-5V8M8-5V8M-8 4H8"/><path d="M-4 1L5-7L8-5L0 3Z" fill="#eeb070"/></g>
<use href="#dot" x="731" y="111"/>
<use href="#c3b" x="746" y="117"/><use href="#c3g" x="769" y="117"/>
<g transform="translate(792,117)"><use href="#c3g"/><rect x="-3" y="-3" width="6" height="6" fill="#2e3643" stroke="#6cb5f0"/></g>
<rect x="807" y="108" width="1" height="20" fill="#d0d3d6"/>
<g transform="translate(820,117)"><path d="M-8-9L-2-6V8H-8Z" fill="#6cb5f0"/><path d="M-4-9L0-7V9L-4 7Z" fill="#9fcef2"/><path d="M2 0H9M6-2L9 0L6 2" stroke="#ddd" fill="none"/></g>
<g transform="translate(844,117)"><path d="M-9-6H-1M-5-10V-2" stroke="#ddd"/><rect x="-2" y="-2" width="11" height="11" fill="#6cb5f0"/></g>
<g transform="translate(867,117)"><rect x="-8" y="-8" width="16" height="16" fill="#cfcfcf"/><rect x="-5" y="-5" width="10" height="10" fill="#2e3643" stroke="#999"/></g>
<g transform="translate(890,117)"><path d="M-8 8V0L2-8L8 6Z" fill="#9fcef2"/><path d="M-8 8V0L-3-4V8Z" fill="#ddd"/><path d="M3-9L9-3M9-9L3-3" stroke="#ef5a5a" stroke-width="2"/></g>
<g transform="translate(912,117)"><path d="M-8-8A4 4 0 1 1-8-2" fill="none" stroke="#ddd"/><rect x="-2" y="-2" width="11" height="11" fill="#6cb5f0"/></g>
<g transform="translate(936,117)"><path d="M-8 4L-2-8L8 1L2 9Z" fill="#ddd"/><path d="M-5 3L0-7L5 1L-1 7Z" fill="#6cb5f0"/></g>
<g transform="translate(958,117)"><path d="M-8-2L-3-8H8V3L3 9H-8Z" fill="#6cb5f0"/><rect x="2" y="-9" width="7" height="7" fill="#ddd"/></g>
<g transform="translate(981,117)"><rect x="-9" y="-9" width="6" height="6" fill="#ef6a6a"/><rect x="-2" y="-9" width="6" height="6" fill="#6cb5f0"/><rect x="-4" y="-2" width="12" height="11" fill="#6cb5f0"/></g>
<rect x="999" y="108" width="1" height="20" fill="#d0d3d6"/>
<g transform="translate(1011,117)"><path d="M-9-4L-2-9L8-3V7L0 9L-9 4Z" fill="#d8d8d8"/><path d="M-3-6Q5-4 3 6" stroke="#6cb5f0" stroke-width="3" fill="none"/></g>
<g transform="translate(1034,117)"><path d="M-9 4L0-8L9-1V8H-5Z" fill="#d8d8d8"/><path d="M-6 1L1-6L7-2L0 4Z" fill="#6cb5f0"/></g>
<g transform="translate(1056,117)"><path d="M-7-7V9" stroke="#6cb5f0" stroke-width="1.500"/><path d="M-3-4L3-8H8V4L3 8H-3Z" fill="#d8d8d8"/></g>
<g transform="translate(1079,117)"><rect x="-9" y="-9" width="6" height="6" fill="#ef6a6a"/><rect x="-2" y="-9" width="6" height="6" fill="#6cb5f0"/><path d="M-5-1H8V9H-5Z" fill="#d8d8d8"/><path d="M-5 3H8" stroke="#444"/></g>
<rect x="1095" y="108" width="1" height="20" fill="#d0d3d6"/>
<g transform="translate(1108,117)"><path d="M-8-6H-2M-5-9V-3" stroke="#5fd08a" stroke-width="1.500"/><use href="#box" y="2"/></g>
<g transform="translate(1132,117)"><path d="M-4-8L8-9V3L-2 5Z" fill="#d8d8d8"/><path d="M-2 1L-6 9H-9L-5 1Z" fill="#e0b040"/></g>
<g transform="translate(1155,117)"><path d="M-8-6L-2-8V7L-8 8Z" fill="#d8d8d8"/><path d="M1-8L7-6V8L1 7Z" fill="#6cb5f0"/><path d="M-.5-9V9" stroke="#ddd"/></g>
<g transform="translate(1177,117)"><path d="M-8-5L-2-9H9V4L3 9H-8Z" fill="#d8d8d8"/><rect x="-6" y="-3" width="9" height="10" fill="#6cb5f0" stroke="#333"/></g>
<g transform="translate(1201,117)"><use href="#c3g"/><path d="M-8 4L-5 8L1 1" fill="none" stroke="#3fb070" stroke-width="2"/></g>

<!-- LEFT TOOLBAR -->
<path d="M9 137H26M9 139H26" stroke="#a8adb5" stroke-dasharray="1.200 1.200"/>
<g transform="translate(16,0)">
<path class="d" d="M-7 160L7 146"/>
<path d="M-5 179L5 170" class="d"/><path d="M-8 183L-3 182L-7 178ZM9 167L4 168L8 172Z" fill="#ddd"/>
<path class="d" d="M-8 203H3"/><path class="s" d="M3 191A6 6 0 1 1 3 203"/>
<path class="s" d="M0 210L8 216L5 225H-5L-8 216Z"/>
<rect x="-7" y="235" width="14" height="11" class="d"/>
<path class="d" d="M-7 270C-6 261 0 256 8 255"/>
<circle cy="285" r="7.500" class="s"/><path d="M0 285L6 280" stroke="#6cb0e6" stroke-dasharray="1.500 1"/>
<path class="s" d="M-5 303C-9 303-9 309-6 310C-8 314-2 316 0 313C3 316 8 313 6 310C10 308 8 302 4 303C2 299-3 300-5 303Z"/>
<path class="d" d="M-8 335C-6 326-2 322 0 328C2 334 5 332 8 322"/>
<ellipse cy="351" rx="8" ry="5" class="d"/>
<path class="d" d="M-1 378C-9 376-9 367 0 366C4 366 8 368 8 372"/>
<rect x="-7" y="392" width="11" height="7" class="s"/><circle cx="3" cy="399" r="4" class="s"/><path d="M-1 386H4L7 389V396" stroke="#6cb0e6" fill="#6cb5f0"/>
<rect x="-7" y="414" width="11" height="7" class="s"/><circle cx="3" cy="421" r="4" class="s"/><circle cx="5" cy="411" r="3.500" fill="#f0d060"/>
<path d="M0 435V437M-7 441V443M7 441V443M-7 431V433M7 431V433M0 444V446" stroke="#ddd" stroke-width="1.500"/>
<path class="s" d="M-7 451V471M7 451V471M-10 455H10M-10 467H10"/><rect x="-5" y="456" width="10" height="10" fill="#5ba0c8" opacity=".55"/>
<path class="s" d="M-7 473V493M7 473V493M-10 477H10M-10 489H10"/><rect x="-5" y="478" width="10" height="10" fill="#7da2c4"/>
<path d="M-8 497V513H8V504L1 497Z" fill="#dfdfdf"/><circle cy="505" r="2.500" fill="#3a3f48"/>
<path class="s" d="M-8 520H8V534H-8ZM-8 525H8M-8 530H8M-3 525V534M3 525V534"/>
<text x="0" y="558" text-anchor="middle" style="font-size:21px;fill:#dfe1e3">A</text>
<circle cx="-4" cy="566" r="3.500" fill="#5fd08a"/><circle cx="5" cy="576" r="3.500" fill="#7fb8e8"/><path d="M0 566H5V570M3 568L5 570L7 568" stroke="#eee" fill="none"/>
</g>

<!-- RIGHT TOOLBAR -->
<path d="M1703 137H1719M1703 139H1719" stroke="#a8adb5" stroke-dasharray="1.200 1.200"/>
<g transform="translate(1711,0)">
<path d="M-3 158L7 145L9 148L-1 161Z" fill="#f0c080"/><circle cx="-4" cy="158" r="2.500" fill="#ef5a78"/><path d="M-8 161H9" stroke="#6cb0e6"/>
<circle cx="-4" cy="171" r="2.500" class="s"/><path d="M0 170H6V174" class="s"/><circle cx="3" cy="180" r="3" class="l"/><circle cx="-2" cy="180" r="3" class="l"/>
<path class="s" d="M-2 204L-9 204L-2 190ZM1 190V204"/><path class="l" d="M3 190L9 204H3Z"/>
<path class="s" d="M8 212H0A5 5 0 0 0 0 224H8"/><path class="l" d="M8 215H0A3 3 0 0 0 0 221H8"/>
<path class="s" d="M-7 234h5v5h-5zM2 234h5v5h-5zM-7 243h5v5h-5zM2 243h5v5h-5z"/><path d="M6 245H10V249H6Z" fill="#fff"/>
<path d="M0 254V272M-9 263H9" stroke="#eee" stroke-width="1.800"/><path d="M-3 257L0 253L3 257ZM-3 269L0 273L3 269ZM-6 260L-10 263L-6 266ZM6 260L10 263L6 266Z" fill="#eee"/>
<path class="s" d="M5 279A7.500 7.500 0 1 1-4 279"/><path d="M-1 275V281L3 278Z" fill="#ddd"/>
<rect x="-8" y="306" width="9" height="9" class="s"/><path class="l" d="M-8 306V299H8V315H1"/>
<path class="s" d="M-8 321H1V336H-8Z"/><path class="l" d="M1 321H4L9 336H1"/><path class="s" d="M-3 332H4M1 330L4 332L1 334"/>
<path d="M-8 345H8" stroke="#ddd" stroke-dasharray="2 1.500"/><path d="M-1 346L5 359M4 346L-2 359" stroke="#eee" stroke-width="2"/><circle cx="-2" cy="361" r="2" class="s"/><circle cx="5" cy="361" r="2" class="s"/>
<path d="M-8 374H7M-8 376H4" stroke="#ddd" stroke-dasharray="2 1"/><path class="s" d="M7 367V381M1 371L6 374"/>
<path class="s" d="M-8 389H8V401H-8ZM2 385V391"/>
<path class="s" d="M-8 411H8V424H-8ZM-3 408V415M3 408V415"/>
<path d="M-8 440H8" stroke="#cfd3d8"/><path d="M-5 437L-1 440L-5 443ZM5 437L1 440L5 443Z" fill="#cfd3d8"/>
<path class="s" d="M-8 469V463L-1 454"/><path class="s" d="M3 453H9"/>
<path class="s" d="M-7 490V476Q-6 475-2 475A10 10 0 0 1 3 475H9"/>
<path class="s" d="M-7 498L-6 509C-3 502 1 497 5 503C7 506 8 500 8 497"/>
<path class="l" d="M-7 519H4V532H-7ZM-7 519L-3 515H8V528L4 532M4 519L8 515"/><path class="l" d="M-10 521V530"/>
</g>

<!-- COMMAND LINE -->
<rect x="0" y="1240" width="29" height="56" fill="#2c3340"/>
<path d="M8 1244H25M8 1246H25" stroke="#ddd" stroke-dasharray="1.500 1"/>
<path d="M10.500 1255L19.500 1264M19.500 1255L10.500 1264" stroke="#eee" stroke-width="2"/>
<path d="M9 1290L17 1282M15 1277A4 4 0 0 0 22 1283" stroke="#eee" stroke-width="2.300" fill="none"/>
<rect x="29" y="1240" width="1698" height="29" fill="#c6c6c6"/>
<rect x="29" y="1270" width="1698" height="24" fill="#fff"/>
<text class="cmd" x="32" y="1261">选择注释对象或</text>
<text class="cmd" x="169" y="1261" textLength="168" lengthAdjust="spacingAndGlyphs">[放弃(U)/模式(M)]:</text>
<text class="cmd" x="350" y="1261" textLength="53" lengthAdjust="spacingAndGlyphs">*取消*</text>
<rect x="33.500" y="1276.500" width="15" height="11" fill="#f4f4f4" stroke="#666"/><rect x="33.500" y="1276.500" width="15" height="2.500" fill="#888"/><path d="M36 1282L38 1283L36 1285M39 1285H42" stroke="#333" fill="none" stroke-width=".8"/>
<path d="M52 1281H58L55 1284Z" fill="#666"/>
<text x="68" y="1288" textLength="71" style="font-size:17px;fill:#a0a0a0;font-style:italic">键入命令</text>

<!-- MODEL TABS -->
<path d="M16 1296L24 1313H56L62 1296Z" fill="#3b4453"/>
<path d="M63 1313L68 1296H128L125 1313Z" fill="#3b4453" opacity=".75"/>
<path d="M136 1313L141 1298H156V1310Z" fill="#2f3744"/>
<text x="27" y="1309" style="font-size:12px;fill:#fff;font-weight:700">模型</text>
<text x="74" y="1309" textLength="44" style="font-size:12px;fill:#b4b8be">Layout1</text>
<path d="M142 1304H150M146 1300V1308" stroke="#9aa0a8" stroke-width="2"/>

<!-- STATUS BAR -->
<rect x="1151" y="1298" width="29" height="22" fill="#3b4453"/>
<rect x="1183" y="1298" width="220" height="22" fill="#333b49"/>
<rect x="1405" y="1298" width="160" height="22" fill="#333b49"/>
<rect x="1557" y="1298" width="46" height="22" fill="#333b49"/>
<rect x="1598" y="1298" width="28" height="22" fill="#333b49"/>
<rect x="1628" y="1298" width="24" height="22" fill="#333b49"/>
<rect x="1654" y="1298" width="22" height="22" fill="#333b49"/>
<rect x="1678" y="1298" width="45" height="22" fill="#333b49"/>
<rect x="1252" y="1298" width="22" height="22" fill="#5b8fc7"/>
<rect x="1381" y="1298" width="22" height="22" fill="#5b8fc7"/>
<rect x="1449" y="1298" width="22" height="22" fill="#5b8fc7"/>
<text x="1154" y="1314" style="font-size:12px;fill:#d4d6da">模型</text>
<path d="M1187 1303H1203M1187 1308H1203M1187 1313H1203M1191 1299V1317M1195 1299V1317M1199 1299V1317" stroke="#c4c7ca" fill="none"/>
<path d="M1214 1303H1226M1214 1309H1226M1214 1315H1226" stroke="#c4c7ca" stroke-width="2" stroke-dasharray="2 3"/>
<use href="#car" x="1240" y="1309"/>
<path d="M1256 1301V1316H1271M1256 1311H1264V1316" stroke="#fff" fill="none" stroke-width="1.300"/>
<circle cx="1285" cy="1311" r="6" class="s"/><path class="s" d="M1285 1311L1292 1301M1287 1305V1311"/>
<use href="#car" x="1307" y="1309"/>
<path d="M1327 1301V1317" stroke="#5fd08a"/><path d="M1322 1301L1332 1317" stroke="#c04a6a"/><rect x="1325" y="1307" width="4" height="4" fill="#333b49" stroke="#ddd"/>
<use href="#car" x="1347" y="1309"/>
<path class="s" d="M1361 1316H1375M1361 1316L1373 1303"/><path d="M1367 1316A6 6 0 0 0 1366 1310" stroke="#6cb0e6" fill="none"/>
<rect x="1385.500" y="1303.500" width="14" height="13" fill="none" stroke="#fff"/><rect x="1384" y="1301" width="4" height="4" fill="#5b8fc7" stroke="#fff"/>
<use href="#car" x="1412" y="1309"/>
<path d="M1425 1303H1441" stroke="#d4d6da"/><path d="M1425 1307H1441" stroke="#d4d6da" stroke-width="1.500"/><path d="M1425 1311H1437" stroke="#d4d6da" stroke-width="2"/><path d="M1425 1315H1434" stroke="#d4d6da" stroke-width="3"/>
<g transform="translate(1458,1309)"><path d="M0-8L3 2L8 8L2 5H-2L-8 8L-3 2Z" fill="#fff"/></g><circle cx="1466" cy="1304" r="3" fill="none" stroke="#fff"/>
<g transform="translate(1484,1309)"><path d="M0-8L3 2L8 8L2 5H-2L-8 8L-3 2Z" fill="#c8cbce"/></g><path d="M1489 1300L1488 1305L1492 1303" fill="#f0f0f0"/>
<g transform="translate(1508,1309)"><path d="M0-8L3 2L8 8L2 5H-2L-8 8L-3 2Z" fill="#c8cbce"/></g>
<text x="1526" y="1314" textLength="13" lengthAdjust="spacingAndGlyphs" style="font-size:12px;fill:#d4d6da">1:1</text>
<use href="#car" x="1546" y="1309"/>
<circle cx="1569" cy="1309" r="5.500" fill="none" stroke="#d4d6da" stroke-width="3"/><path d="M1569 1301V1317M1561 1309H1577M1563.500 1303.500L1574.500 1314.500M1574.500 1303.500L1563.500 1314.500" stroke="#d4d6da" stroke-width="2" stroke-dasharray="2.500 11"/>
<use href="#car" x="1589" y="1309"/>
<path d="M1601 1309H1617M1609 1301V1317" stroke="#e4e4e4" stroke-width="1.500"/>
<rect x="1629" y="1302" width="7" height="7" fill="none" stroke="#ccc"/><circle cx="1642" cy="1307" r="3" fill="none" stroke="#ccc"/><path d="M1633 1317L1636 1311L1639 1317Z" fill="none" stroke="#ccc"/>
<path d="M1656 1304L1663 1300L1670 1304V1312L1663 1318L1656 1312Z" fill="#3a70b0"/><rect x="1655" y="1308" width="6" height="7" fill="#e8b040"/><path d="M1663 1313L1666 1316L1671 1309" stroke="#5fd08a" fill="none" stroke-width="2"/><path d="M1659 1304H1667" stroke="#eee"/>
<rect x="1681.500" y="1302.500" width="14" height="12" fill="none" stroke="#aaa"/><path d="M1684 1312L1687 1309M1693 1305L1690 1308" stroke="#ddd"/>
<path d="M1705 1303H1721M1705 1309H1721M1705 1315H1721" stroke="#d4d6da" stroke-width="2"/>

<!-- window border -->
<rect x="0" y="0" width="1731" height="3" fill="#0b72a8"/>
<rect x="0" y="1326" width="1731" height="2" fill="#0b72a8"/>
<rect x="0" y="0" width="2" height="1328" fill="#0b72a8"/>
<rect x="1729" y="0" width="2" height="1328" fill="#0b72a8"/>
</svg>
</body></html>
